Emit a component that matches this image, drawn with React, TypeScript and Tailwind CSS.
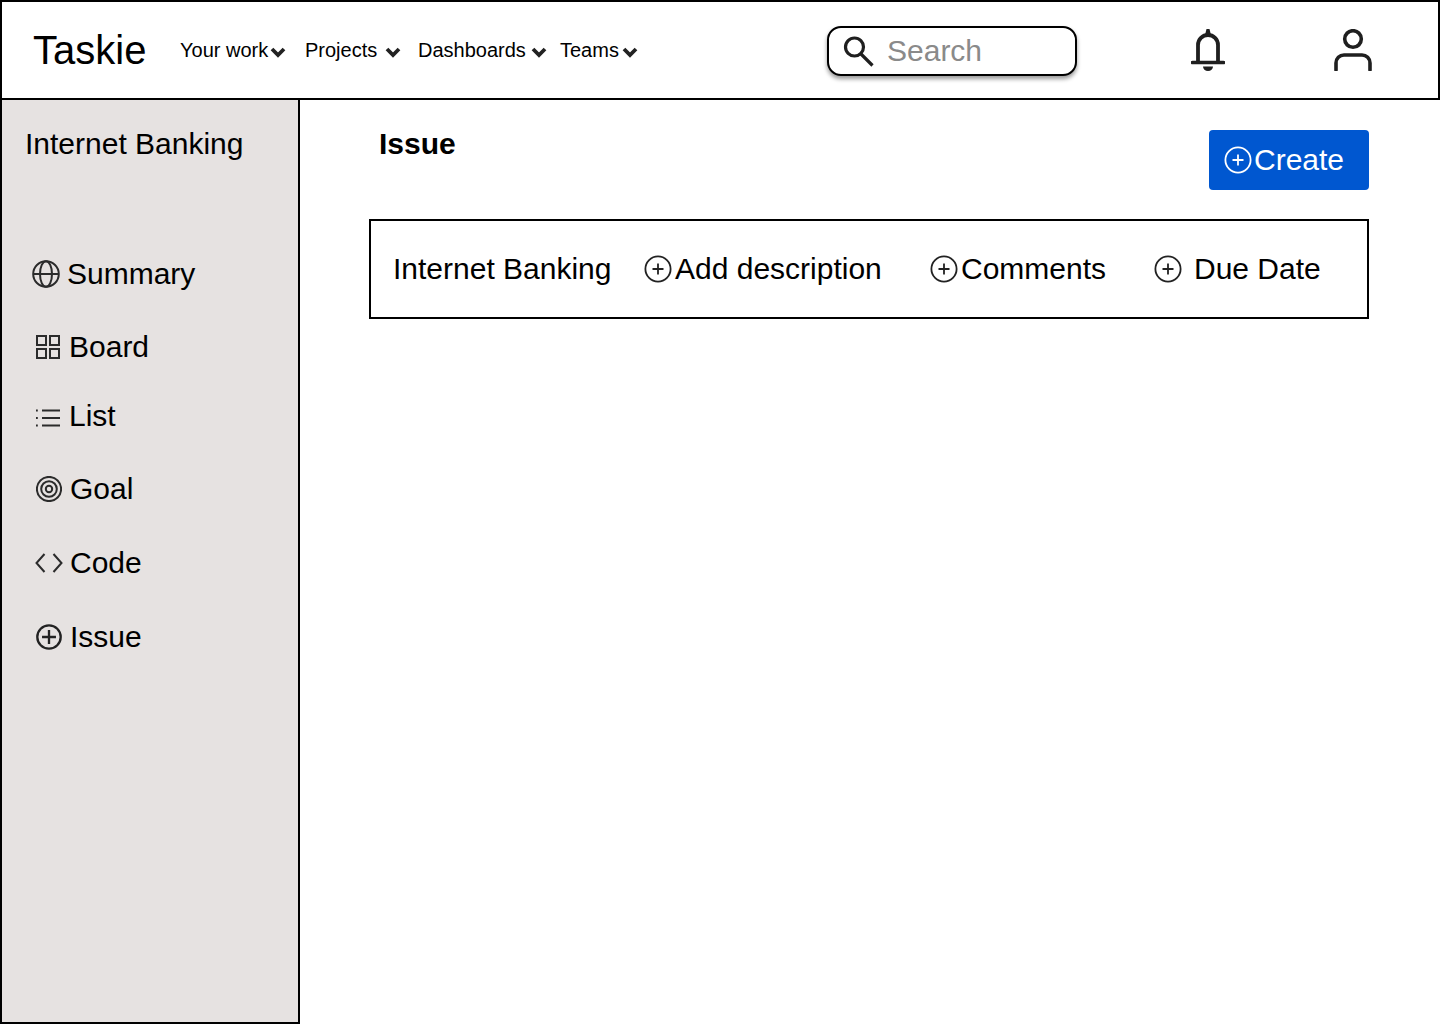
import type { ReactNode } from "react";

function PlusCircle({ className, weight = 1.8, arm = 5.5 }: { className: string; weight?: number; arm?: number }) {
    return (
        <svg viewBox="0 0 28 28" fill="none" stroke="currentColor" strokeWidth={weight} className={`shrink-0 ${className}`}>
            <circle cx="14" cy="14" r="12.6" />
            <path d={`M14 ${14 - arm}v${arm * 2}M${14 - arm} 14h${arm * 2}`} />
        </svg>
    );
}

function Chevron() {
    return (
        <svg viewBox="0 0 16 12" className="mt-[3px] h-[12px] w-[16px] shrink-0 text-[#222]" fill="none" stroke="currentColor" strokeWidth="3.8">
            <path d="M2 3l6 6 6-6" />
        </svg>
    );
}

function NavItem({ label, className }: { label: string; className: string }) {
    return (
        <span className={`flex items-center ${className}`}>
            <span>{label}</span>
            <Chevron />
        </span>
    );
}

function SideItem({ icon, label, className }: { icon: ReactNode; label: string; className: string }) {
    return (
        <div className={`flex h-[36px] items-center text-[30px] leading-none ${className}`}>
            {icon}
            <span>{label}</span>
        </div>
    );
}

function CardAction({ label, className, iconClass }: { label: string; className: string; iconClass: string }) {
    return (
        <div className={`flex items-center ${className}`}>
            <PlusCircle className={`h-[28px] w-[28px] text-[#222] ${iconClass}`} />
            <span>{label}</span>
        </div>
    );
}

const stroke = { fill: "none", stroke: "#2b2b2b", strokeWidth: 2 };

export default function App() {
    return (
        <div className="h-[1024px] w-[1440px] overflow-hidden bg-white font-['Liberation_Sans',Arial,sans-serif] text-black">
            <header className="flex h-[100px] items-center border-2 border-black">
                <div className="ml-[31px] w-[147px] text-[40px] leading-none">Taskie</div>
                <nav className="flex w-[647px] items-center text-[20px] leading-none">
                    <NavItem label="Your work" className="w-[125px] gap-[2px]" />
                    <NavItem label="Projects" className="w-[113px] gap-[8px]" />
                    <NavItem label="Dashboards" className="w-[142px] gap-[5px]" />
                    <NavItem label="Teams" className="gap-[3px]" />
                </nav>
                <div className="mt-[2px] flex h-[50px] w-[250px] items-center rounded-[14px] border-2 border-black bg-white shadow-[0_3px_4px_rgba(0,0,0,0.4)]">
                    <svg viewBox="0 0 32 32" className="ml-[13px] h-[32px] w-[32px] text-[#1f1f1f]" fill="none" stroke="currentColor" strokeWidth="3.2">
                        <circle cx="12.5" cy="12" r="9" />
                        <path d="M19 19l11.5 11.5" />
                    </svg>
                    <span className="ml-[13px] text-[30px] leading-none text-[#8a8a8a]">Search</span>
                </div>
                <svg viewBox="0 0 34 44" className="ml-[114px] h-[44px] w-[34px] text-[#1f1f1f]" fill="none" stroke="currentColor" strokeWidth="3.8">
                    <path d="M7 34V17a10 10 0 0 1 20 0v17" />
                    <path d="M1.5 34.5h31" strokeWidth="3.6" strokeLinecap="round" />
                    <path d="M14 7l1.5-6h3L20 7z" fill="currentColor" stroke="none" />
                    <path d="M12 38.5h10a5 4.5 0 0 1-10 0z" fill="currentColor" stroke="none" />
                </svg>
                <svg viewBox="0 0 38 42" className="ml-[109px] h-[42px] w-[38px] text-[#1f1f1f]" fill="none" stroke="currentColor" strokeWidth="3.6">
                    <circle cx="19" cy="10" r="8.3" />
                    <path d="M2 41v-7a8 8 0 0 1 8-8h18a8 8 0 0 1 8 8v7" strokeLinecap="round" />
                </svg>
            </header>
            <div className="flex h-[924px]">
                <aside className="w-[300px] shrink-0 border-x-2 border-b-2 border-black bg-[#e6e2e1] pt-[26px]">
                    <h2 className="ml-[23px] h-[36px] text-[30px] leading-[36px] font-normal">Internet Banking</h2>
                    <SideItem
                        className="mt-[94px] ml-[30px] gap-[7px]"
                        label="Summary"
                        icon={
                            <svg viewBox="0 0 28 28" className="h-[28px] w-[28px]" {...stroke}>
                                <circle cx="14" cy="14" r="12.8" />
                                <ellipse cx="14" cy="14" rx="6" ry="12.8" />
                                <path d="M1.2 14h25.6" />
                            </svg>
                        }
                    />
                    <SideItem
                        className="mt-[37px] ml-[34px] gap-[9px]"
                        label="Board"
                        icon={
                            <svg viewBox="0 0 24 24" className="h-[24px] w-[24px]" {...stroke}>
                                <rect x="1" y="1" width="9" height="9" />
                                <rect x="14" y="1" width="9" height="9" />
                                <rect x="1" y="14" width="9" height="9" />
                                <rect x="14" y="14" width="9" height="9" />
                            </svg>
                        }
                    />
                    <SideItem
                        className="mt-[33px] ml-[34px] gap-[9px]"
                        label="List"
                        icon={
                            <svg viewBox="0 0 24 20" className="mt-[3px] h-[20px] w-[24px]" {...stroke}>
                                <path d="M6 2.5h18M6 10h18M6 17.5h18" />
                                <path d="M0 2.5h1.8M0 10h1.8M0 17.5h1.8" />
                            </svg>
                        }
                    />
                    <SideItem
                        className="mt-[37px] ml-[34px] gap-[8px]"
                        label="Goal"
                        icon={
                            <svg viewBox="0 0 26 26" className="h-[26px] w-[26px]" {...stroke}>
                                <circle cx="13" cy="13" r="12.1" />
                                <circle cx="13" cy="13" r="7.8" />
                                <circle cx="13" cy="13" r="3.2" />
                            </svg>
                        }
                    />
                    <SideItem
                        className="mt-[38px] ml-[33px] gap-[7px]"
                        label="Code"
                        icon={
                            <svg viewBox="0 0 28 22" className="h-[22px] w-[28px]" {...stroke}>
                                <path d="M9.5 2L1.5 11l8 9M18.5 2l8 9-8 9" />
                            </svg>
                        }
                    />
                    <SideItem
                        className="mt-[38px] ml-[34px] gap-[8px]"
                        label="Issue"
                        icon={<PlusCircle weight={2.5} arm={7.5} className="h-[26px] w-[26px] text-[#222]" />}
                    />
                </aside>
                <main className="min-w-0 flex-1 pt-[30px] pl-[69px]">
                    <div className="flex w-[1000px] items-start justify-between">
                        <h1 className="mt-[-4px] ml-[10px] text-[30px] leading-[36px] font-bold">Issue</h1>
                        <button className="flex h-[60px] w-[160px] items-center rounded-[4px] bg-[#0057d0] pl-[15px] text-[30px] leading-none text-white">
                            <PlusCircle className="mr-[2px] h-[28px] w-[28px]" />
                            Create
                        </button>
                    </div>
                    <section className="mt-[29px] flex h-[100px] w-[1000px] items-center border-2 border-black pl-[22px] text-[30px] leading-none">
                        <span className="w-[251px]">Internet Banking</span>
                        <CardAction className="w-[286px]" iconClass="mr-[3px]" label="Add description" />
                        <CardAction className="w-[224px]" iconClass="mr-[3px]" label="Comments" />
                        <CardAction iconClass="mr-[12px]" className="" label="Due Date" />
                    </section>
                </main>
            </div>
        </div>
    );
}
